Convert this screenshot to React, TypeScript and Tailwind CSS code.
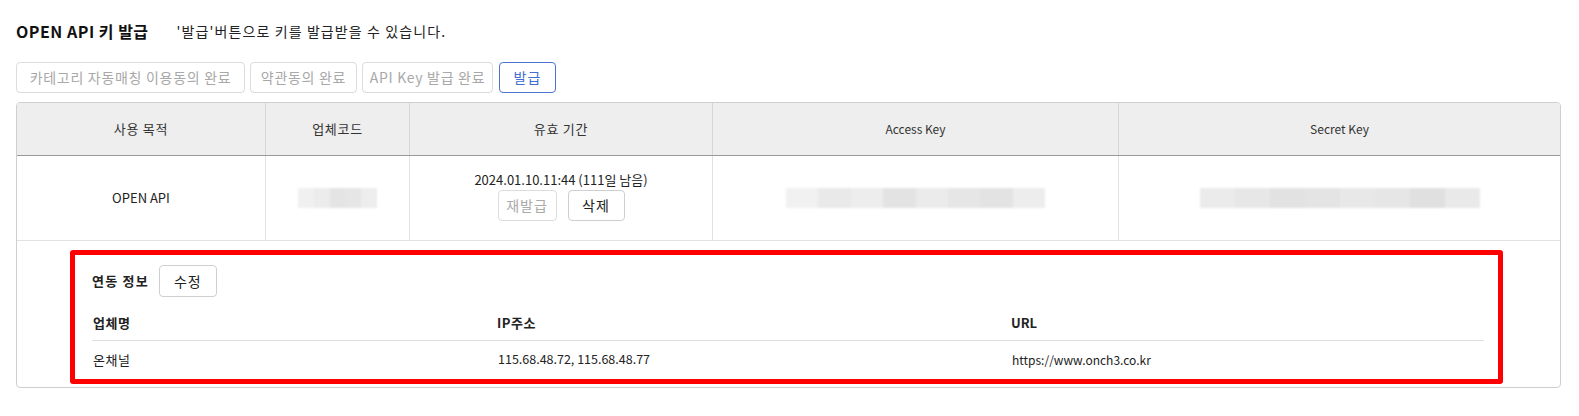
import React from 'react';

const FONT = { fontFamily: '"Noto Sans CJK KR", "Noto Sans", sans-serif' };

const steps = [
  { label: '카테고리 자동매칭 이용동의 완료', w: 'w-[229px]' },
  { label: '약관동의 완료', w: 'w-[107px]' },
  { label: 'API Key 발급 완료', w: 'w-[131px]' },
];

// blurred placeholder for masked values
const Masked = ({ shades, w }: { shades: string[]; w: string }) => (
  <div className={`flex h-[20px] ${w} blur-[1px]`}>
    {shades.map((c, i) => (
      <div key={i} className="flex-1" style={{ background: c }} />
    ))}
  </div>
);

const App = () => {
  return (
    <div className="w-[1579px] h-[416px] bg-white pl-4 pt-[22px] text-[#333]" style={FONT}>
      <div className="flex items-center h-[18px]">
        <h2 className="text-[16px] font-bold text-[#111] tracking-[0.5px]">OPEN API 키 발급</h2>
        <span className="ml-[28px] text-[14px] text-[#222] tracking-[1.1px]">'발급'버튼으로 키를 발급받을 수 있습니다.</span>
      </div>

      <div className="flex gap-[5px] mt-[22px] h-[31px]">
        {steps.map(s => (
          <button
            key={s.label}
            className={`${s.w} border border-[#dcdcdc] rounded-[4px] text-[14px] tracking-[0.7px] text-[#a8a8a8] bg-white`}
          >
            {s.label}
          </button>
        ))}
        <button className="ml-[1px] w-[57px] border border-[#4a74cc] rounded-[4px] text-[14px] tracking-[1px] text-[#3f6fcf] bg-white">
          발급
        </button>
      </div>

      <div className="mt-[9px] w-[1545px] border border-[#cfcfcf] rounded-[4px] overflow-hidden text-[13px]">
        <div className="grid grid-cols-[249px_144px_303px_406px_1fr] h-[53px] bg-[#eeeeee] border-b border-[#999]">
          {['사용 목적', '업체코드', '유효 기간'].map(h => (
            <div key={h} className="flex items-center justify-center text-[#333] tracking-[0.7px] border-r border-[#d6d6d6]">
              {h}
            </div>
          ))}
          <div className="flex items-center justify-center text-[12px] text-[#333] border-r border-[#d6d6d6]">Access Key</div>
          <div className="flex items-center justify-center text-[12px] text-[#333]">Secret Key</div>
        </div>

        <div className="grid grid-cols-[249px_144px_303px_406px_1fr] h-[85px] border-b border-[#e2e2e2]">
          <div className="flex items-center justify-center border-r border-[#e2e2e2] text-[#222]">OPEN API</div>
          <div className="flex items-center justify-center border-r border-[#e2e2e2]">
            <Masked w="w-[79px]" shades={['#f0f0f0', '#ececec', '#e4e4e4', '#e6e6e6', '#ededed']} />
          </div>
          <div className="flex flex-col items-center justify-center border-r border-[#e2e2e2]">
            <span className="text-[13px] text-[#222] leading-[16px] mt-[-4px]">2024.01.10.11:44 (111일 남음)</span>
            <div className="flex gap-[11px] mt-[2px]">
              <button className="w-[59px] h-[31px] border border-[#dcdcdc] rounded-[4px] text-[14px] tracking-[1px] text-[#aaa] bg-white">
                재발급
              </button>
              <button className="w-[57px] h-[31px] border border-[#cfcfcf] rounded-[4px] text-[14px] tracking-[1px] text-[#222] bg-white">
                삭제
              </button>
            </div>
          </div>
          <div className="flex items-center justify-center border-r border-[#e2e2e2]">
            <Masked
              w="w-[259px]"
              shades={['#f1f1f1', '#e9e9e9', '#ededed', '#e3e3e3', '#ebebeb', '#e6e6e6', '#e3e3e3', '#ededed']}
            />
          </div>
          <div className="flex items-center justify-center">
            <Masked
              w="w-[280px]"
              shades={['#ebebeb', '#e7e7e7', '#e2e2e2', '#e4e4e4', '#e8e8e8', '#e6e6e6', '#e0e0e0', '#e9e9e9']}
            />
          </div>
        </div>

        <div className="pt-[9px] pb-[3px] pl-[53px]">
          <div className="w-[1433px] h-[134px] border-[5px] border-[#ff0000] rounded-[3px] pl-[17px] pr-[14px] pt-[10px]">
            <div className="flex items-center h-[32px]">
              <span className="text-[13px] font-bold text-[#222] tracking-[1.2px]">연동 정보</span>
              <button className="ml-[10px] w-[58px] h-[32px] border border-[#cfcfcf] rounded-[4px] text-[14px] tracking-[1px] text-[#222] bg-white">
                수정
              </button>
            </div>
            <div className="grid grid-cols-[405px_514px_1fr] h-[44px] pt-[16px] border-b border-[#dedede] text-[13px] font-bold text-[#222] tracking-[0.5px]">
              <span className="pl-[1px]">업체명</span>
              <span>IP주소</span>
              <span className="tracking-normal">URL</span>
            </div>
            <div className="grid grid-cols-[405px_514px_1fr] h-[37px] items-center text-[12px] text-[#222]">
              <span className="pl-[1px] text-[13px] tracking-[0.5px]">온채널</span>
              <span className="text-[12.5px] pl-[1px]">115.68.48.72, 115.68.48.77</span>
              <span className="pl-[1px]">https://www.onch3.co.kr</span>
            </div>
          </div>
        </div>
      </div>
    </div>
  );
};

export default App;
